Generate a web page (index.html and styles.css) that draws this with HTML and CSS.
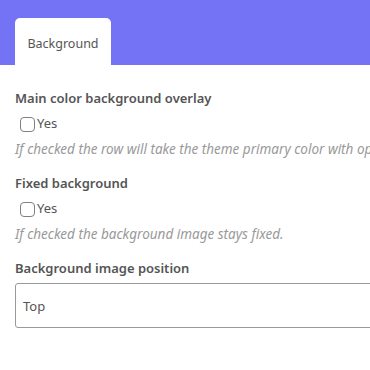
FILE: index.html
```html
<!DOCTYPE html>
<html lang="en">
<head>
  <meta charset="UTF-8">
  <meta name="viewport" content="width=device-width, initial-scale=1.0">
  <title>Row settings</title>
  <link rel="stylesheet" href="styles.css">
</head>
<body>
  <!-- Tabs -->
  <div class="tabs">
    <div class="tab active">Background</div>
  </div>

  <div class="panel">
    <div class="field">
      <div class="field-label">Main color background overlay</div>
      <label class="check"><span class="box"></span>Yes</label>
      <div class="help">If checked the row will take the theme primary color with opacity</div>
    </div>

    <div class="field">
      <div class="field-label">Fixed background</div>
      <label class="check"><span class="box"></span>Yes</label>
      <div class="help">If checked the background image stays fixed.</div>
    </div>

    <div class="field">
      <div class="field-label">Background image position</div>
      <div class="select">Top</div>
    </div>
  </div>
</body>
</html>
```

FILE: styles.css
```css
* {
  margin: 0;
  padding: 0;
  box-sizing: border-box;
}

body {
  font-family: "Noto Sans", "Open Sans", Arial, sans-serif;
  font-size: 13px;
  color: #555;
  background: #fff;
  overflow: hidden;
}

.tabs {
  display: flex;
  height: 65px;
  padding: 18px 15px 0;
  background-color: #7472f5;
}

.tab {
  width: 96px;
  display: flex;
  align-items: center;
  justify-content: center;
  background: #fff;
  border-radius: 5px 5px 0 0;
  font-size: 12.5px;
  color: #555;
  padding-top: 3px;
}

.panel {
  padding: 23px 15px 0;
  overflow: hidden;
}

.field {
  margin-bottom: 13px;
}

.field-label {
  font-weight: 600;
  line-height: 20px;
  white-space: nowrap;
}

.check {
  display: flex;
  align-items: center;
  height: 30px;
  padding-left: 5px;
  color: #555;
}

.box {
  width: 15px;
  height: 15px;
  border: 1px solid #808080;
  border-radius: 4px;
  margin-right: 2px;
  margin-top: 3px;
}

.help {
  font-size: 13.5px;
  font-style: italic;
  color: #999;
  line-height: 22px;
  white-space: nowrap;
}

.select {
  margin-top: 5px;
  width: 380px;
  height: 45px;
  display: flex;
  align-items: center;
  padding-left: 7px;
  border: 1px solid #999;
  border-radius: 3px;
}
```
